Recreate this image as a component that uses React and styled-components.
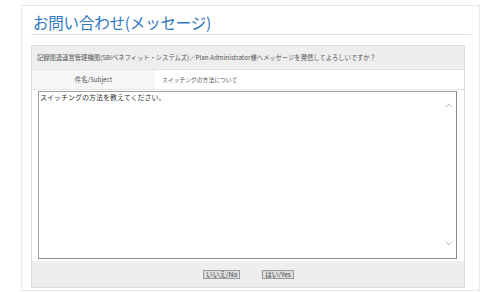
import React from "react";
import styled, { createGlobalStyle } from "styled-components";

const GlobalStyle = createGlobalStyle`
  html, body {
    margin: 0;
    padding: 0;
    background: #ffffff;
    font-family: "Noto Sans CJK JP", "Noto Sans", sans-serif;
  }
`;

export default function App() {
  return (
    <>
      <GlobalStyle />
      <Page>
        <Card>
          <TitleBar>
            <Title>お問い合わせ(メッセージ)</Title>
          </TitleBar>

          <Panel>
            <Notice>
              記録関連運営管理機関(SBIベネフィット・システムズ)／Plan Administrator様へメッセージを発信してよろしいですか？
            </Notice>

            <SubjectRow>
              <SubjectLabel>件名/Subject</SubjectLabel>
              <SubjectValue>スイッチングの方法について</SubjectValue>
            </SubjectRow>

            <BodyArea>
              <MessageBox>
                スイッチングの方法を教えてください。
                <ScrollArrow $pos="top">
                  <svg width="8" height="5" viewBox="0 0 8 5">
                    <path d="M0.5 4.5 L4 1 L7.5 4.5" fill="none" stroke="#bdbdbd" strokeWidth="1" />
                  </svg>
                </ScrollArrow>
                <ScrollArrow $pos="bottom">
                  <svg width="8" height="5" viewBox="0 0 8 5">
                    <path d="M0.5 0.5 L4 4 L7.5 0.5" fill="none" stroke="#bdbdbd" strokeWidth="1" />
                  </svg>
                </ScrollArrow>
              </MessageBox>
            </BodyArea>

            <Footer>
              <SmallButton>いいえ/No</SmallButton>
              <SmallButton>はい/Yes</SmallButton>
            </Footer>
          </Panel>
        </Card>
      </Page>
    </>
  );
}

const Page = styled.div`
  width: 500px;
  height: 292px;
  padding: 5px 0 0 21px;
  box-sizing: border-box;
`;

const Card = styled.div`
  box-sizing: border-box;
  width: 459px;
  height: 286px;
  border: 1px solid #e8e8e8;
  padding: 0 8px 0 9px;
`;

const TitleBar = styled.div`
  height: 28px;
  border-bottom: 1px solid #dedede;
  display: flex;
  align-items: flex-end;
`;

const Title = styled.h1`
  margin: 0 0 2px 2px;
  font-size: 15.5px;
  font-weight: normal;
  line-height: 20px;
  color: #2f78c0;
  letter-spacing: -0.2px;
`;

const Panel = styled.div`
  box-sizing: border-box;
  width: 434px;
  margin-top: 10px;
  border: 1px solid #dcdcdc;
  display: flex;
  flex-direction: column;
`;

const Notice = styled.div`
  height: 23px;
  background: #eeeeee;
  border-bottom: 1px solid #e2e2e2;
  padding-left: 5px;
  display: flex;
  align-items: center;
  font-size: 6.3px;
  color: #555555;
  white-space: nowrap;
`;

const SubjectRow = styled.div`
  display: flex;
  height: 19px;
  border-bottom: 1px solid #e6e6e6;
`;

const SubjectLabel = styled.div`
  width: 123px;
  background: #f6f6f6;
  display: flex;
  align-items: center;
  justify-content: center;
  font-size: 6.3px;
  color: #555555;
`;

const SubjectValue = styled.div`
  flex: 1;
  background: #ffffff;
  display: flex;
  align-items: center;
  padding-left: 7px;
  font-size: 5.8px;
  color: #555555;
`;

const BodyArea = styled.div`
  padding: 1px 7px 2px 6px;
  background: #ffffff;
`;

const MessageBox = styled.div`
  position: relative;
  box-sizing: border-box;
  height: 168px;
  border: 1px solid #a0a0a0;
  border-right-color: #8a8a8a;
  border-bottom-color: #8a8a8a;
  padding: 0 1px;
  font-size: 7px;
  line-height: 10px;
  color: #333333;
`;

const ScrollArrow = styled.div`
  position: absolute;
  right: 3px;
  ${(p) => (p.$pos === "top" ? "top: 11px;" : "bottom: 12px;")}
  display: flex;
`;

const Footer = styled.div`
  height: 26px;
  background: #eeeeee;
  display: flex;
  align-items: center;
  justify-content: center;
  gap: 22px;
  padding-left: 1px;
`;

const SmallButton = styled.button`
  box-sizing: border-box;
  height: 9px;
  padding: 0 2px;
  border: 1px solid #9a9a9a;
  background: #dedede;
  font-family: "Noto Sans CJK JP", "Noto Sans", sans-serif;
  font-size: 6.6px;
  line-height: 7px;
  color: #444444;
  cursor: pointer;
`;
